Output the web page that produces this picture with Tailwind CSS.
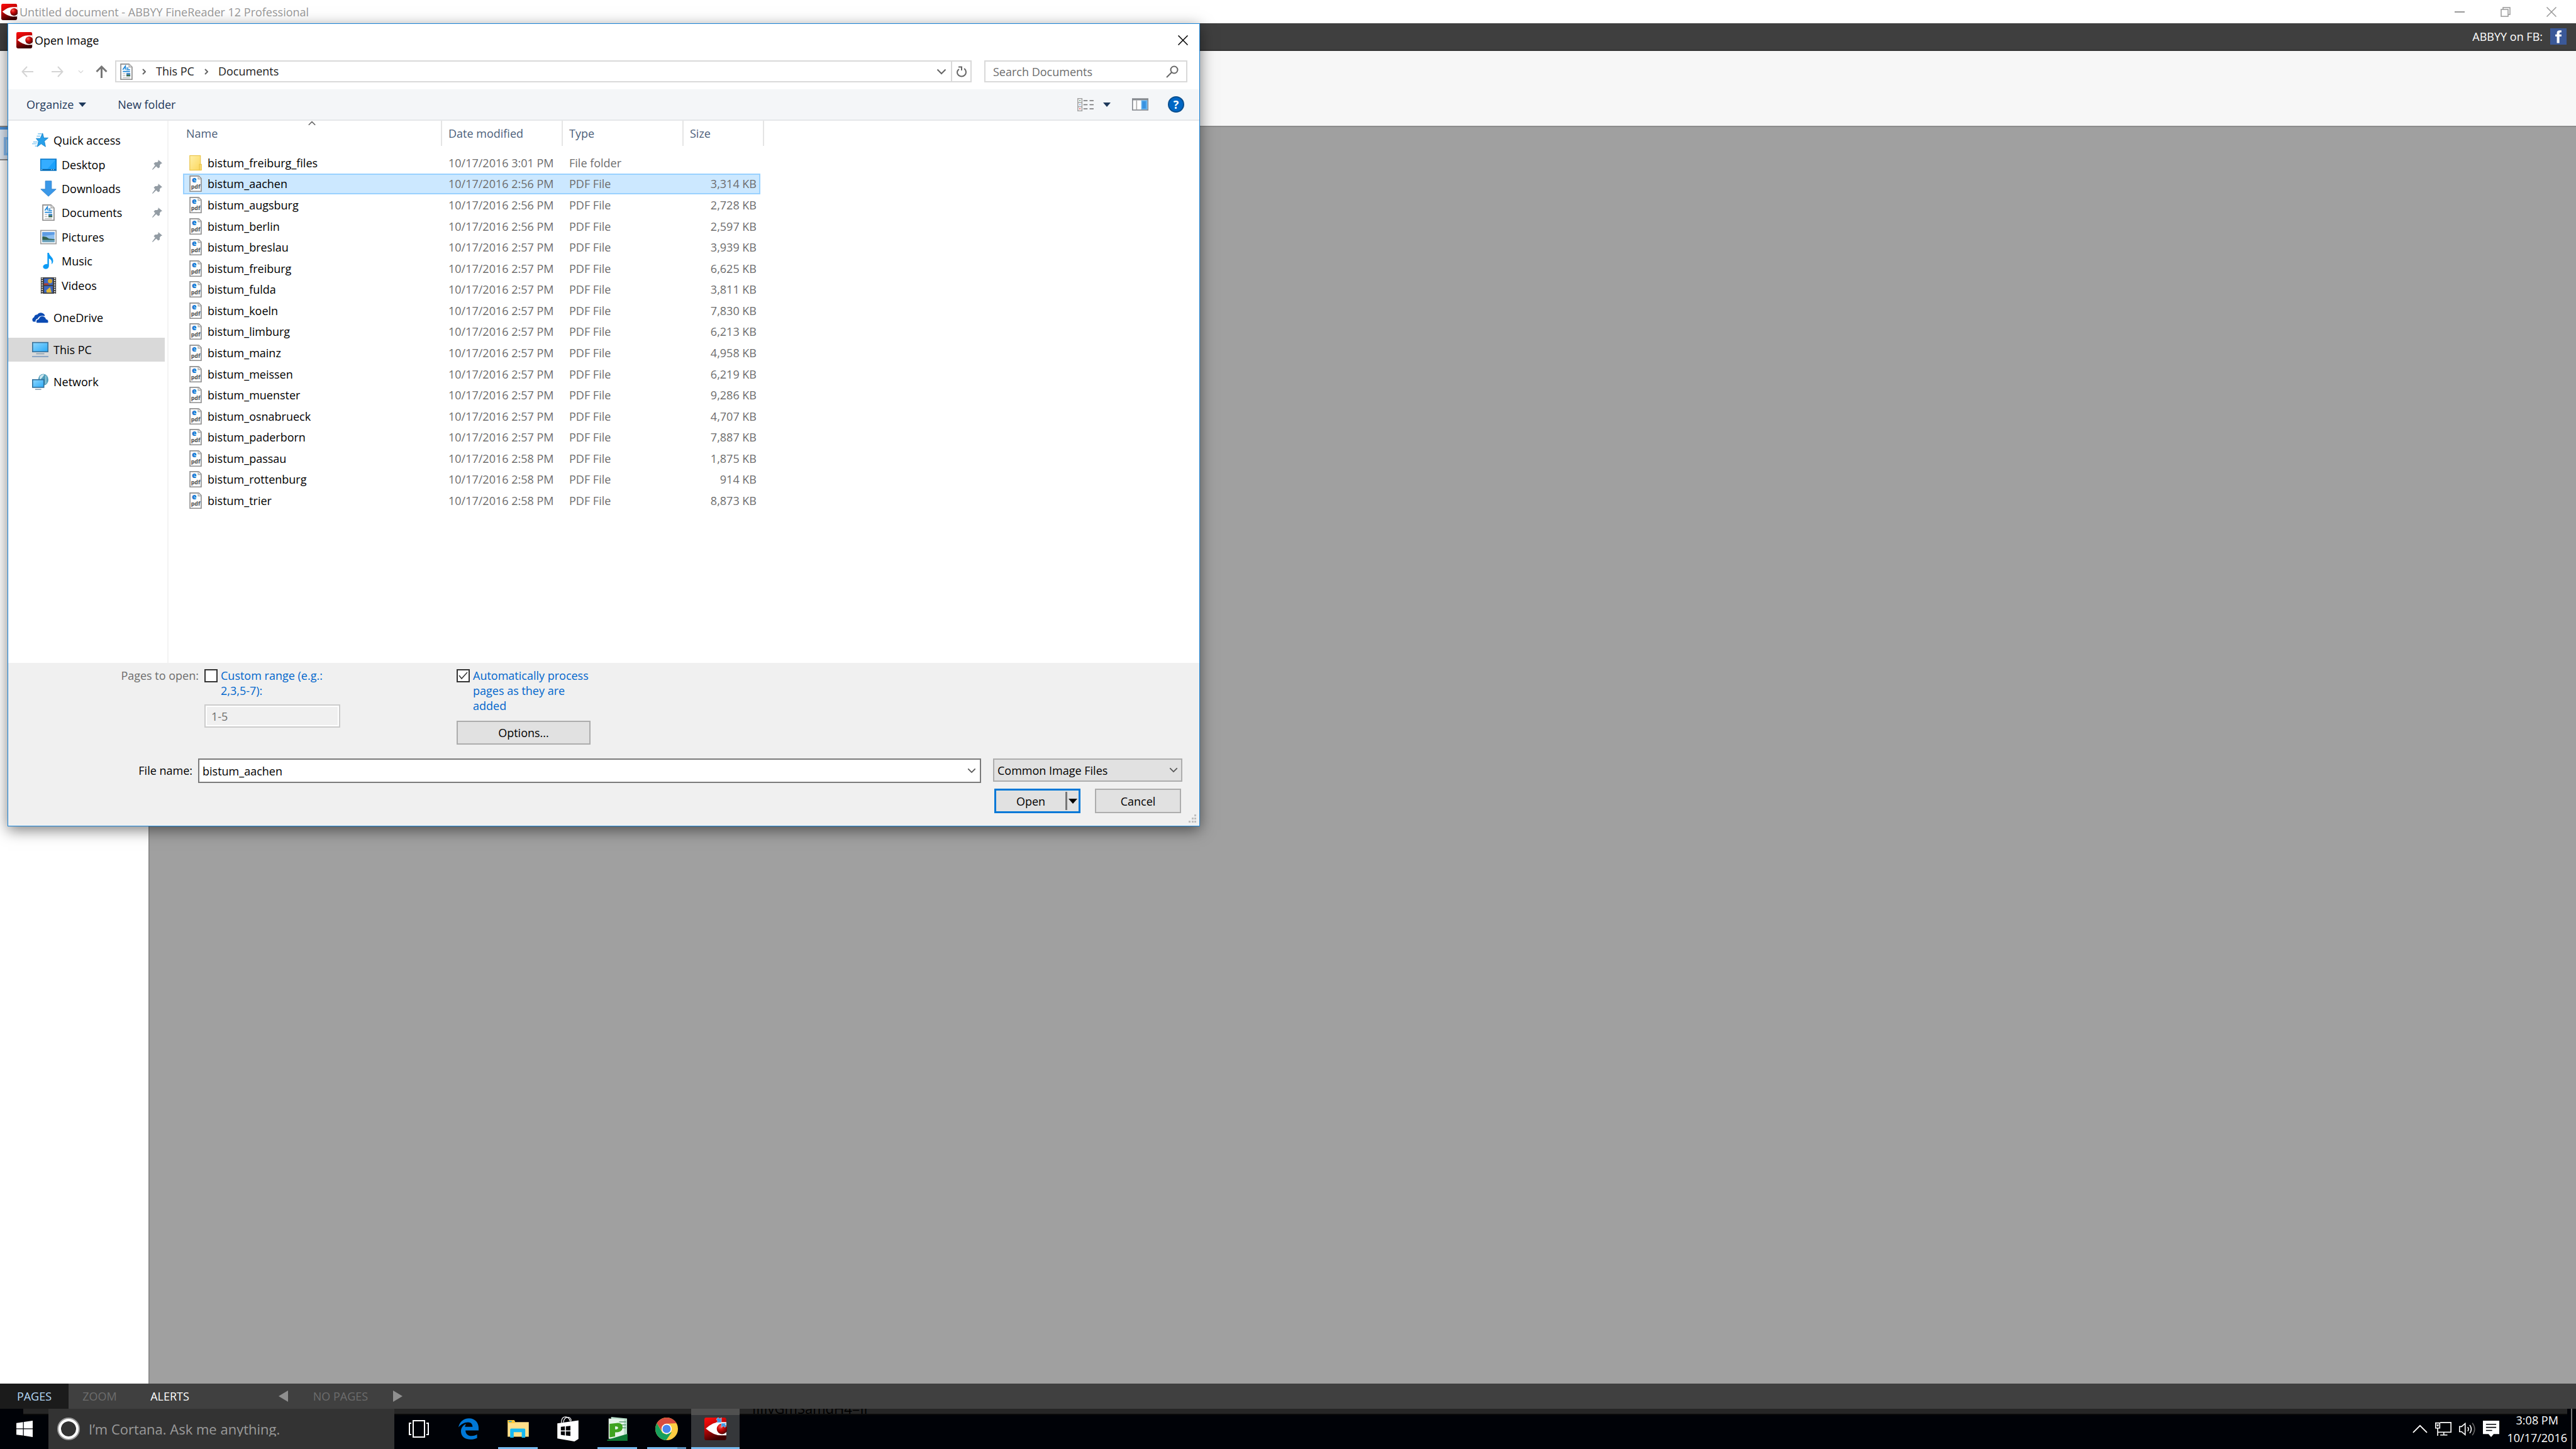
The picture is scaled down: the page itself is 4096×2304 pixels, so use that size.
<!DOCTYPE html>
<html lang="en">
  <head>
    <meta charset="UTF-8" />
    <meta name="viewport" content="width=device-width, initial-scale=1.0" />
    <title>Untitled document - ABBYY FineReader 12 Professional</title>
    <script src="https://cdn.jsdelivr.net/npm/@tailwindcss/browser@4"></script>
  </head>
  <body class="relative h-screen overflow-hidden flex flex-col bg-white text-black text-[18px] leading-6 font-['Open_Sans','Noto_Sans',sans-serif]">
    <!-- Icon sprites -->
    <svg class="absolute w-0 h-0">
      <defs>
        <linearGradient id="redGrad" x1="0" y1="0" x2="0.4" y2="1">
          <stop offset="0" stop-color="#ff0d0d" /><stop offset="0.45" stop-color="#c80606" /><stop offset="1" stop-color="#3c0000" />
        </linearGradient>
        <radialGradient id="ballGrad" cx="0.35" cy="0.3" r="0.75">
          <stop offset="0" stop-color="#ff5a50" /><stop offset="0.4" stop-color="#cc0c0c" /><stop offset="1" stop-color="#4a0000" />
        </radialGradient>
        <linearGradient id="screenGrad" x1="0" y1="0" x2="1" y2="1">
          <stop offset="0" stop-color="#8fd8ff" /><stop offset="1" stop-color="#2baaf7" />
        </linearGradient>
        <linearGradient id="folderGrad" x1="0" y1="0" x2="1" y2="1">
          <stop offset="0" stop-color="#fff0a8" /><stop offset="1" stop-color="#fbd75e" />
        </linearGradient>
      </defs>
      <symbol id="abbyy" viewBox="0 0 32 32">
        <rect width="31" height="32" rx="3" fill="url(#redGrad)" />
        <path d="M2 15.500Q14 5 25 6.500H31V25H25Q14 26 2 15.500Z" fill="#fff" />
        <circle cx="25" cy="16" r="7.500" fill="url(#ballGrad)" />
      </symbol>
      <symbol id="doc" viewBox="0 0 24 32">
        <path d="M1 1H17L23 7V31H1Z" fill="#fcfcfc" stroke="#8b8b8b" stroke-width="2" />
        <path d="M17 1V7H23" fill="#ddd" stroke="#a5a5a5" stroke-width="1.500" />
        <path d="M5 12L10 5V12M12 9H16M12 12H19M5 15.500H19" fill="none" stroke="#1c86d8" stroke-width="2" />
        <path d="M5 20H10M5 24H10M5 28H19" stroke="#a9a9a9" stroke-width="1.500" />
        <rect x="12" y="18.500" width="7.500" height="6.500" fill="#4a8ac4" /><rect x="12" y="22" width="7.500" height="3" fill="#3f6b4c" />
      </symbol>
      <symbol id="pdf" viewBox="0 0 24 32">
        <path d="M1 1H18L23 6V31H1Z" fill="#fcfcfc" stroke="#8e8e8e" stroke-width="2" />
        <path d="M17 1V7H23" fill="#e6e6e6" stroke="#a8a8a8" stroke-width="1.500" />
        <text x="4.500" y="13" font-family="Open Sans" font-weight="800" font-size="15" fill="#1279d4">e</text>
        <text x="3" y="26" font-family="Open Sans" font-weight="700" font-size="11" fill="#4f4f4f">pdf</text>
      </symbol>
      <symbol id="folder" viewBox="0 0 26 32">
        <rect x="1" y="1" width="22" height="30" fill="url(#folderGrad)" stroke="#e9c349" stroke-width="1.500" />
        <path d="M21 19H25V31H21Z" fill="#fbdc74" stroke="#e9c349" stroke-width="1.500" />
      </symbol>
      <symbol id="star" viewBox="0 0 28 26">
        <path d="M18 1L20 9H27.500L21 14.500L23 24L15.500 19L9 24L11 15L7 10H14Z" fill="#27a0ea" stroke="#1884cb" />
        <path d="M10 2H17M8 6H14M2 16H9M0 19H8M5 23H9" stroke="#7cc6f3" stroke-width="1.500" />
      </symbol>
      <symbol id="desktop" viewBox="0 0 32 24">
        <rect x="1" y="1" width="30" height="22" fill="#1ba1fb" stroke="#0b79c9" stroke-width="2" />
        <path d="M2 2H30L14 20H2Z" fill="#35adff" /><path d="M2 21.500H30" stroke="#0b5f9e" stroke-width="2" /><path d="M2 21.500H5M21 21.500H29" stroke="#fff" stroke-dasharray="2 2" />
      </symbol>
      <symbol id="download" viewBox="0 0 32 32">
        <path d="M10 1H22V17H31L16 31L1 17H10Z" fill="#3a98e8" stroke="#2b7ec9" />
      </symbol>
      <symbol id="picture" viewBox="0 0 32 28">
        <rect x="1" y="1" width="30" height="26" fill="#fff" stroke="#9b9b9b" stroke-width="2" />
        <rect x="4" y="4" width="24" height="20" fill="#8dbff0" /><path d="M4 4H28V9L4 12Z" fill="#5e9ce4" />
        <path d="M4 13Q11 12 17 17L28 18V20H4Z" fill="#33624f" /><path d="M4 19.500H28V24H4Z" fill="#6ea4bd" />
      </symbol>
      <symbol id="music" viewBox="0 0 24 32">
        <path d="M10 0H13C14 7 23 9 21 18Q20 21 18 22Q20 14 13 11V26Q12 32 5 31.500Q0 30 2 25Q5 21 10 22Z" fill="#0c9bf5" />
      </symbol>
      <symbol id="video" viewBox="0 0 28 30">
        <rect width="28" height="30" fill="#3c3c3c" />
        <path d="M2.500 1V30M25.500 1V30" stroke="#e8e8e8" stroke-width="2.500" stroke-dasharray="2 2" />
        <rect x="6" y="2" width="16" height="12" fill="#3b67c4" /><rect x="6" y="16" width="16" height="12" fill="#3b67c4" />
        <circle cx="17" cy="7" r="4" fill="#d9a92c" /><path d="M6 11H14V14H6Z" fill="#b33d30" /><path d="M10 24L17 18L20 28H11Z" fill="#e0b93a" />
      </symbol>
      <symbol id="onedrive" viewBox="0 0 32 20">
        <path d="M2 18Q-2 12 4 9Q5 4 10 4Q14 -1 20 1Q25 3 25 7Q14 5 11 12Q6 13 7 18Z" fill="#0b4bb3" />
        <path d="M9 20Q7 14 13 13Q16 6 23 8Q27 10 27 13Q33 14 31 20Z" fill="#0b4bb3" />
      </symbol>
      <symbol id="pc" viewBox="0 0 32 30">
        <rect x="1" y="1" width="30" height="18" fill="url(#screenGrad)" stroke="#3a7199" stroke-width="2" />
        <path d="M8 23H24" stroke="#8ba1b3" stroke-width="2" /><path d="M0 28.500H32" stroke="#8fa6c4" stroke-width="2.500" />
      </symbol>
      <symbol id="network" viewBox="0 0 32 32">
        <ellipse cx="22" cy="12" rx="10" ry="11.500" fill="#4e9cb9" /><path d="M15 6Q20 0 24 2Q20 8 15 13Z" fill="#cfe8f0" /><path d="M27 4V20" stroke="#9fd0e0" stroke-width="2" />
        <rect x="1" y="12" width="22" height="15" fill="url(#screenGrad)" stroke="#2f6f9c" stroke-width="2" />
        <path d="M6 31H18" stroke="#8ba1b3" stroke-width="2" />
      </symbol>
      <symbol id="pin" viewBox="0 0 20 20">
        <path d="M12 0L20 7L17 8L15 11L15 15L12 17L8 13L1 20L0 19L6 11L3 8L6 5L10 5L12 3Z" fill="#939ca4" />
      </symbol>
      <symbol id="chevDown" viewBox="0 0 16 10">
        <path d="M1.500 1.500L8 8L14.500 1.500" fill="none" stroke="currentColor" stroke-width="2" />
      </symbol>
      <symbol id="cross" viewBox="0 0 16 16">
        <path d="M0.500 0.500L15.500 15.500M15.500 0.500L0.500 15.500" fill="none" stroke="currentColor" stroke-width="1.500" />
      </symbol>
    </svg>

    <!-- Main window title bar -->
    <header class="h-[37px] shrink-0 flex items-center pl-[2px] pr-[3px] text-[#999]">
      <svg class="w-[26px] h-[26px]"><use href="#abbyy" /></svg>
      <h1 class="pl-[3px] grow">Untitled document - ABBYY FineReader 12 Professional</h1>
      <button aria-label="Minimize" class="w-[73px] h-full grid place-items-center"><span class="w-4 h-[2px] bg-[#999]"></span></button>
      <button aria-label="Restore" class="w-[73px] h-full grid place-items-center">
        <svg class="w-4 h-4" viewBox="0 0 16 16" fill="none" stroke="#999" stroke-width="1.5"><path d="M1 4H12V15H1ZM4 4V1H15V12H12" /></svg>
      </button>
      <button aria-label="Close" class="w-[73px] h-full grid place-items-center"><svg class="w-4 h-4"><use href="#cross" /></svg></button>
    </header>
    <div class="h-11 shrink-0 bg-[#3f3f3f] border-b-2 border-[#333] flex items-center justify-end gap-3 pr-[15px] text-white">
      <span>ABBYY on FB:</span>
      <a href="#" aria-label="Facebook" class="w-[26px] h-[26px] bg-[#3b5998]">
        <svg viewBox="0 0 32 32"><path d="M22 4H19Q13 4 13 9V12H10V16H13V29H18V16H22V12H18V10Q18 8 20 8H22Z" fill="#fff" /></svg>
      </a>
    </div>
    <div class="h-[119px] shrink-0 bg-[#f7f7f7]"></div>

    <main class="grow flex min-h-0">
      <aside class="w-[236px] shrink-0 bg-white border-t-2 border-[#888]">
        <div class="h-[53px] bg-[#dce6f2] border-t-4 border-b-2 border-t-[#4a90d9] border-b-[#888] p-[6px] pt-3">
          <div class="h-full w-10 bg-[#b5d3f0] border-4 border-[#86bcf2]"></div>
        </div>
      </aside>
      <section class="grow bg-[#a0a0a0] border-t-2 border-l-2 border-[#8c8c8c]"></section>
    </main>

    <footer class="h-10 shrink-0 bg-[#404040] flex items-center text-[#6d6d6d]">
      <button class="w-[109px] h-full bg-[#1b1b1b] text-[#b5d9f7]">PAGES</button>
      <button class="w-[99px] h-full">ZOOM</button>
      <button class="w-[124px] h-full text-white">ALERTS</button>
      <button aria-label="Previous page" class="ml-[111px] w-[15px]"><svg viewBox="0 0 15 18"><path d="M15 0V18L0 9Z" fill="#8f8f8f" /></svg></button>
      <span class="w-[167px] text-center">NO PAGES</span>
      <button aria-label="Next page" class="w-[15px]"><svg viewBox="0 0 15 18"><path d="M0 0V18L15 9Z" fill="#8f8f8f" /></svg></button>
    </footer>

    <!-- Taskbar -->
    <nav class="relative h-16 shrink-0 bg-[#000207] flex items-stretch text-white">
      <div class="absolute left-[37px] right-[14px] top-0 h-[10px] bg-[#262626] border-b-2 border-[#0a0a0a] overflow-hidden">
        <span class="absolute left-[1159px] -top-[11px] leading-5 text-[22px] text-black">IIIIvGmSamdH4=II</span>
      </div>
      <button aria-label="Start" class="relative w-[77px] grid place-items-center">
        <svg class="w-[26px] h-[26px]" viewBox="0 0 32 32" fill="#fff"><path d="M0 4.500L13 2.700V15H0ZM14.500 2.500L32 0V15H14.500ZM0 16.500H13V29L0 27.300ZM14.500 16.500H32V32L14.500 29.300Z" /></svg>
      </button>
      <label class="relative w-[550px] bg-[#333] flex items-center gap-[14px] pl-[14px]">
        <svg class="w-9 h-9" viewBox="0 0 36 36"><circle cx="18" cy="18" r="15" fill="none" stroke="#999" stroke-width="6" /><circle cx="18" cy="18" r="14" fill="none" stroke="#fff" stroke-width="4" /></svg>
        <input type="text" aria-label="Search" placeholder="I’m Cortana. Ask me anything." class="grow text-[22px] placeholder:text-[#9a9a9a]" />
      </label>
      <button aria-label="Task view" class="relative w-[78px] grid place-items-center">
        <svg class="w-8 h-7" viewBox="0 0 32 28" fill="none" stroke="#fff" stroke-width="2"><path d="M7 1H25V27H7ZM4 5H1V23H4M28 5H31V23H28" /></svg>
      </button>
      <button aria-label="Edge" class="relative w-[79px] grid place-items-center">
        <svg class="w-8 h-[34px]" viewBox="0 0 40 42"><path d="M0 18C2 7 10 0 21 0C33 0 40 9 40 19V24H14C14 31 19 35 26 35C31 35 34 34 37 32V39C33 41 29 42 24 42C12 42 5 35 5 26C5 19 9 14 15 11C14 13 13 15 13 17H28C28 12 25 8 19 8C12 8 5 12 0 18Z" fill="#0078d7" /></svg>
      </button>
      <button aria-label="File Explorer" class="relative w-[79px] grid place-items-center">
        <svg class="w-[34px] h-7" viewBox="0 0 42 35"><path d="M0 0H13L15 4H42V33H0Z" fill="#ffe08a" /><path d="M0 0H13L15 6H0Z" fill="#ffc933" /><path d="M2 2H8V4H2Z" fill="#1fa3e0" /><path d="M5 35V19Q5 17 7 17H33Q35 17 35 19V35H28V24H12V35Z" fill="#16b9f2" /></svg>
        <span class="absolute bottom-0 inset-x-2 h-[3px] bg-[#76b9ed]"></span>
      </button>
      <button aria-label="Store" class="relative w-[79px] grid place-items-center">
        <svg class="w-[34px] h-10" viewBox="0 0 42 50"><path d="M8 13Q8 1 16 1Q23 1 26 10M12 12Q13 4 19 2Q27 1 28 9" fill="none" stroke="#fff" stroke-width="1.500" /><path d="M0 14L42 8V45L34 50L0 44Z" fill="#fff" /><path d="M7 21L15 20V28H7ZM17 20L26 19V28H17ZM7 30H15V38L7 37ZM17 30H26V39L17 38Z" fill="#000207" /></svg>
      </button>
      <button aria-label="Project" class="relative w-[79px] grid place-items-center">
        <svg class="w-[34px] h-[38px]" viewBox="0 0 42 48"><path d="M8 0L40 3V42H8Z" fill="#b9dfca" /><path d="M3 3L34 5V44H3Z" fill="#e6f4ea" /><path d="M24 10H38M26 16H38M26 22H38" stroke="#4b8f63" stroke-width="1.500" /><path d="M5 14L22 12Q32 13 31 22Q30 31 16 31V39L5 41ZM16 19V25Q22 25 22 22Q22 19 16 19Z" fill="#3fa320" fill-rule="evenodd" /><path d="M0 46L34 36L41 34V48H0Z" fill="#0f7a35" /></svg>
        <span class="absolute bottom-0 inset-x-2 h-[3px] bg-[#76b9ed]"></span>
      </button>
      <button aria-label="Chrome" class="relative w-[78px] grid place-items-center">
        <svg class="w-9 h-9" viewBox="0 0 44 44"><circle cx="22" cy="22" r="22" fill="#ffcd42" /><path d="M3 11A22 22 0 0 1 41 11L22 12L13 17L12 25Z" fill="#d94d40" /><path d="M3 11L14 30L22 33L32 28L21 44A22 22 0 0 1 3 11Z" fill="#17a05d" /><circle cx="22" cy="22" r="10" fill="#fff" /><circle cx="22" cy="22" r="8" fill="#4a86ef" /></svg>
        <span class="absolute bottom-0 inset-x-2 h-[3px] bg-[#76b9ed] border-r-[14px] border-[#5b92bd]"></span>
      </button>
      <button aria-label="ABBYY FineReader" class="relative w-[77px] bg-[#35373a] border-t-[10px] border-[#505050] grid place-items-center pb-[10px]">
        <svg class="w-9 h-9" viewBox="0 0 32 32"><use href="#abbyy" /><path d="M18 1L20 0L22 2L24 0V7H17L19 5L17 3ZM24 8H31L29 10L31 12L29 14L27 12L24 14Z" fill="#3b9ae8" stroke="#cfe4f5" stroke-width="0.5" /></svg>
        <span class="absolute bottom-0 inset-x-0 h-[3px] bg-[#76b9ed]"></span>
      </button>
      <div class="relative ml-auto flex items-center gap-3 pr-[6px]">
        <button aria-label="Hidden icons" class="w-6"><svg viewBox="0 0 26 16" fill="none" stroke="#fff" stroke-width="2"><path d="M1 14L13 2L25 14" /></svg></button>
        <button aria-label="Network" class="w-[26px]"><svg viewBox="0 0 32 27" fill="none" stroke="#fff" stroke-width="2"><path d="M10 1H31V20H5M17 20V25M10 25.500H24M1 2H9V12H1ZM5 12V27M3 6H7M5 5V9" /></svg></button>
        <button aria-label="Volume" class="w-[26px]"><svg viewBox="0 0 32 28" fill="none" stroke="#fff" stroke-width="2"><path d="M1 9H5L12 3V25L5 19H1ZM17 10Q20 14 17 18M21 6Q27 14 21 22" /><path d="M26 2Q35 14 26 26" stroke="#666" /></svg></button>
        <button aria-label="Notifications" class="w-[26px]"><svg viewBox="0 0 32 32"><path d="M0 0H32V26H21L16 32L11 26H0Z" fill="#fff" /><path d="M6 7H26M6 13H26M6 19H18" stroke="#000207" stroke-width="2" /></svg></button>
        <div class="flex self-stretch items-center gap-[6px]">
          <div class="text-center leading-7"><div>3:08 PM</div><div>10/17/2016</div></div>
          <span class="self-stretch w-[2px] bg-[#777]"></span>
        </div>
      </div>
    </nav>

    <!-- Open Image dialog -->
    <div role="dialog" aria-labelledby="dlgTitle" class="absolute left-3 top-[37px] w-[1896px] bg-white border border-[#1883d7] shadow-[0_6px_22px_rgba(0,0,0,0.5)]">
      <div class="h-[51px] flex items-center pl-[13px] pr-[18px]">
        <svg class="w-[26px] h-[26px]"><use href="#abbyy" /></svg>
        <h2 id="dlgTitle" class="pl-[3px] grow">Open Image</h2>
        <button aria-label="Close dialog"><svg class="w-4 h-4"><use href="#cross" /></svg></button>
      </div>

      <div class="h-[53px] flex items-start pt-[7px] pl-[21px] pr-[19px] text-[#222]">
        <div class="h-[35px] flex items-center w-[149px] text-[#d4d4d4]">
          <button aria-label="Back" class="w-[19px] mr-[29px]"><svg viewBox="0 0 19 18" fill="none" stroke="currentColor" stroke-width="2"><path d="M19 9H2M9 1L1.500 9L9 17" /></svg></button>
          <button aria-label="Forward" class="w-[19px] mr-[23px]"><svg viewBox="0 0 19 18" fill="none" stroke="currentColor" stroke-width="2"><path d="M0 9H17M10 1L17.500 9L10 17" /></svg></button>
          <button aria-label="Recent" class="w-[9px] mr-[19px]"><svg class="w-full h-2"><use href="#chevDown" /></svg></button>
          <button aria-label="Up" class="w-[19px] text-[#777]"><svg viewBox="0 0 19 20" fill="none" stroke="currentColor" stroke-width="3"><path d="M9.500 20V2M1.500 10L9.500 2L17.500 10" /></svg></button>
        </div>
        <div class="h-[35px] grow border-2 border-[#d9d9d9] flex items-center pl-[6px]">
          <svg class="w-5 h-[26px]"><use href="#doc" /></svg>
          <svg class="ml-[15px] w-[6px] h-[10px]" viewBox="0 0 6 10" fill="none" stroke="#666" stroke-width="2"><path d="M1 1L5 5L1 9" /></svg>
          <a href="#" class="ml-4 pb-[2px]">This PC</a>
          <svg class="ml-4 w-[6px] h-[10px]" viewBox="0 0 6 10" fill="none" stroke="#666" stroke-width="2"><path d="M1 1L5 5L1 9" /></svg>
          <a href="#" class="ml-4 pb-[2px] grow">Documents</a>
          <button aria-label="Previous locations" class="mr-[7px] text-[#666]"><svg class="w-4 h-[10px]"><use href="#chevDown" /></svg></button>
          <button aria-label="Refresh" class="w-[31px] h-full border-l-2 border-[#d9d9d9] grid place-items-center">
            <svg class="w-4 h-[18px]" viewBox="0 0 16 18" fill="none" stroke="#666" stroke-width="2"><path d="M12 4Q15 6 15 10A7 6.500 0 0 1 1 10Q1 7 4 5M3 1.500H8V7" /></svg>
          </button>
        </div>
        <label class="ml-5 w-[323px] h-[35px] border-2 border-[#d9d9d9] flex items-center pl-3 pr-3">
          <input type="search" aria-label="Search Documents" placeholder="Search Documents" class="grow min-w-0 placeholder:text-[#6d6d6d]" />
          <svg class="w-5 h-5" viewBox="0 0 20 20" fill="none" stroke="#666" stroke-width="2"><circle cx="13" cy="7" r="5.500" /><path d="M9 11L1 19" /></svg>
        </label>
      </div>

      <div class="h-[50px] bg-[#f4f6f8] border-b-2 border-[#e5e7e9] flex items-center pl-[29px] pr-6 text-[#1e395b]">
        <button class="flex items-center gap-2">Organize <svg class="w-3 h-[7px]" viewBox="0 0 14 8"><path d="M0 0H14L7 8Z" fill="#1e395b" /></svg></button>
        <button class="ml-[50px]">New folder</button>
        <button aria-label="Change your view" class="ml-auto flex items-center gap-[15px]">
          <svg class="w-[26px] h-[21px]" viewBox="0 0 32 26"><path d="M1 1H9V25H1ZM1 9H9M1 17H9" fill="#fff" stroke="#a3a3a3" stroke-width="2" /><path d="M12 5H20M24 5H32M12 13H20M24 13H32M12 21H20M24 21H32" stroke="#6f6f6f" stroke-width="2" /><rect x="4" y="4" width="2" height="2" fill="#3f7f5f" /><rect x="4" y="12" width="2" height="2" fill="#3f7fe0" /><rect x="4" y="20" width="2" height="2" fill="#e02020" /></svg>
          <svg class="w-3 h-[7px]" viewBox="0 0 14 8"><path d="M0 0H14L7 8Z" fill="#1e395b" /></svg>
        </button>
        <button aria-label="Preview pane" class="ml-[34px]"><svg class="w-[26px] h-5" viewBox="0 0 32 24"><rect x="1" y="1" width="30" height="22" fill="#fff" stroke="#85898e" stroke-width="2" /><path d="M0 2.500H32" stroke="#85898e" stroke-width="3" /><path d="M9 4V22" stroke="#aaa" stroke-width="2" /><rect x="18" y="4" width="12" height="18" fill="#5fb0f0" /><rect x="20" y="6" width="7" height="14" fill="#3a93e0" /></svg></button>
        <button aria-label="Help" class="ml-[31px] w-[26px] h-[26px] rounded-full bg-[#0067c5] border-2 border-[#0a4f8f] text-white font-bold leading-5 text-center">?</button>
      </div>

      <div class="h-[862px] flex">
        <nav class="w-[255px] shrink-0 border-r-2 border-[#f3f3f3] pt-3">
          <ul id="quickAccess" class="h-[269px] flex flex-col"></ul>
          <ul id="places" class="flex flex-col gap-[13px] pt-[13px]"></ul>
        </nav>
        <div class="relative pl-[23px]">
          <svg class="absolute left-[221px] top-0 w-[14px] h-2 rotate-180 text-[#666]"><use href="#chevDown" /></svg>
          <table class="h-[621px] table-fixed w-[924px] border-separate border-spacing-0 text-left">
            <thead class="text-[#4c607a]">
              <tr>
                <th class="h-[50px] w-[412px] p-0 align-top font-normal"><div class="h-10 flex items-center pl-[5px] border-r-2 border-[#e5e5e5]">Name</div></th>
                <th class="w-[192px] p-0 align-top font-normal"><div class="h-10 flex items-center pl-[10px] border-r-2 border-[#e5e5e5]">Date modified</div></th>
                <th class="w-[192px] p-0 align-top font-normal"><div class="h-10 flex items-center pl-[10px] border-r-2 border-[#e5e5e5]">Type</div></th>
                <th class="w-[122px] p-0 align-top font-normal"><div class="h-10 flex items-center pl-[10px]">Size</div></th>
                <th class="w-[6px] p-0 align-top font-normal"><div class="h-10 border-r-2 border-[#e5e5e5]"></div></th>
              </tr>
            </thead>
            <tbody id="files"></tbody>
          </table>
        </div>
      </div>

      <form class="bg-[#f0f0f0] pt-2 pb-5 relative">
        <div class="flex items-start">
          <span class="w-[303px] text-right text-[#6d6d6d]">Pages to open:</span>
          <div class="ml-[9px] w-[401px]">
            <label class="flex items-start gap-[5px] w-[206px] text-[#0066cc]">
              <input type="checkbox" class="appearance-none mt-[2px] w-[21px] h-[21px] shrink-0 bg-white border-2 border-[#333]" />
              <span>Custom range (e.g.: 2,3,5-7):</span>
            </label>
            <input type="text" aria-label="Page range" value="1-5" disabled class="mt-[10px] block w-[216px] h-[37px] border-2 border-[#ccc] outline-2 -outline-offset-4 outline-white bg-[#f0f0f0] pl-[9px] text-[#6d6d6d]" />
          </div>
          <div>
            <label class="flex items-start gap-[5px] w-[218px] text-[#0066cc]">
              <span class="relative mt-[2px] w-[21px] h-[21px] shrink-0">
                <input type="checkbox" checked class="appearance-none block w-full h-full bg-white border-2 border-[#333]" />
                <svg class="absolute inset-0 pointer-events-none" viewBox="0 0 21 21" fill="none" stroke="#333" stroke-width="1.500"><path d="M4 10L8 15L17 5" /></svg>
              </span>
              <span class="w-[192px]">Automatically process pages as they are added</span>
            </label>
            <button type="button" class="mt-3 w-[213px] h-[38px] bg-[#e1e1e1] border-2 border-[#adadad]">Options...</button>
          </div>
        </div>
        <div class="mt-[22px] flex items-start pr-[27px]">
          <label for="fileName" class="w-[293px] leading-[39px] text-right">File name:</label>
          <div class="ml-[9px] grow h-[39px] bg-white border-2 border-[#7a7a7a] flex items-center pr-[6px]">
            <input id="fileName" type="text" value="bistum_aachen" class="grow h-full pl-[5px]" />
            <button type="button" aria-label="File name history" class="text-[#555]"><svg class="w-[14px] h-[9px]"><use href="#chevDown" /></svg></button>
          </div>
          <div class="relative ml-[19px] w-[301px]">
            <select aria-label="File type" class="appearance-none w-full h-[37px] bg-[#e1e1e1] border-2 border-[#adadad] pl-[5px]">
              <option>Common Image Files</option>
            </select>
            <svg class="absolute right-[7px] top-[14px] w-[14px] h-[9px] text-[#555] pointer-events-none"><use href="#chevDown" /></svg>
          </div>
        </div>
        <div class="mt-[9px] flex justify-end gap-[23px] pr-[29px]">
          <div class="w-[137px] h-[39px] flex items-center bg-[#e1e1e1] border-[3px] border-[#0078d7]">
            <button type="submit" class="grow h-full">Open</button>
            <button type="button" aria-label="More open options" class="w-[21px] h-[29px] border-l-[3px] border-[#777] grid place-items-center"><svg class="w-[14px] h-2" viewBox="0 0 14 8"><path d="M0 0H14L7 8Z" /></svg></button>
          </div>
          <button type="button" class="w-[137px] h-[39px] bg-[#e1e1e1] border-2 border-[#adadad]">Cancel</button>
        </div>
        <svg class="absolute right-[5px] bottom-1 w-3 h-[14px]" viewBox="0 0 12 14" fill="#bfbfbf"><path d="M9 0H12V3H9ZM5 5H8V8H5ZM9 5H12V8H9ZM0 10H3V13H0ZM5 10H8V13H5ZM9 10H12V13H9Z" /></svg>
      </form>
    </div>

    <script>
      const quickAccess = [
        { name: "Quick access", icon: "star", root: true },
        { name: "Desktop", icon: "desktop", pinned: true },
        { name: "Downloads", icon: "download", pinned: true },
        { name: "Documents", icon: "doc", pinned: true },
        { name: "Pictures", icon: "picture", pinned: true },
        { name: "Music", icon: "music" },
        { name: "Videos", icon: "video" },
      ];

      const places = [
        { name: "OneDrive", icon: "onedrive" },
        { name: "This PC", icon: "pc", selected: true },
        { name: "Network", icon: "network" },
      ];

      const files = [
        ["bistum_freiburg_files", "3:01", ""],
        ["bistum_aachen", "2:56", "3,314 KB"],
        ["bistum_augsburg", "2:56", "2,728 KB"],
        ["bistum_berlin", "2:56", "2,597 KB"],
        ["bistum_breslau", "2:57", "3,939 KB"],
        ["bistum_freiburg", "2:57", "6,625 KB"],
        ["bistum_fulda", "2:57", "3,811 KB"],
        ["bistum_koeln", "2:57", "7,830 KB"],
        ["bistum_limburg", "2:57", "6,213 KB"],
        ["bistum_mainz", "2:57", "4,958 KB"],
        ["bistum_meissen", "2:57", "6,219 KB"],
        ["bistum_muenster", "2:57", "9,286 KB"],
        ["bistum_osnabrueck", "2:57", "4,707 KB"],
        ["bistum_paderborn", "2:57", "7,887 KB"],
        ["bistum_passau", "2:58", "1,875 KB"],
        ["bistum_rottenburg", "2:58", "914 KB"],
        ["bistum_trier", "2:58", "8,873 KB"],
      ];

      document.getElementById("quickAccess").innerHTML = quickAccess
        .map(
          (item) => `
          <li class="flex-1">
            <a href="#" class="h-full flex items-center ${item.root ? "pl-[38px]" : "pl-[51px]"}">
              <svg class="w-[26px] h-[26px] mr-2"><use href="#${item.icon}" /></svg>
              <span class="grow">${item.name}</span>
              ${item.pinned ? '<svg class="w-4 h-4 mr-2"><use href="#pin" /></svg>' : ""}
            </a>
          </li>`,
        )
        .join("");

      document.getElementById("places").innerHTML = places
        .map(
          (item) => `
          <li class="mr-1 ${item.selected ? "bg-[#d9d9d9]" : ""}">
            <a href="#" class="h-[38px] flex items-center pl-[38px]">
              <svg class="w-[26px] h-[26px] mr-2"><use href="#${item.icon}" /></svg>
              <span>${item.name}</span>
            </a>
          </li>`,
        )
        .join("");

      // every row keeps its 2px border so that selecting one does not change its height
      document.getElementById("files").innerHTML = files
        .map(([name, time, size]) => {
          const cell = name === "bistum_aachen" ? "bg-[#cce8ff] border-[#99d1ff]" : "border-transparent";
          return `
          <tr>
            <td class="p-0 pl-2 border-y-2 border-l-2 ${cell}">
              <div class="flex items-center gap-[9px]">
                <svg class="w-5 h-[26px]"><use href="#${size ? "pdf" : "folder"}" /></svg>${name}
              </div>
            </td>
            <td class="p-0 pl-[10px] border-y-2 text-[#6d6d6d] ${cell}">10/17/2016 ${time} PM</td>
            <td class="p-0 pl-[10px] border-y-2 text-[#6d6d6d] ${cell}">${size ? "PDF File" : "File folder"}</td>
            <td class="p-0 pr-1 border-y-2 border-r-2 text-right text-[#6d6d6d] ${cell}">${size}</td>
          </tr>`;
        })
        .join("");
    </script>
  </body>
</html>
